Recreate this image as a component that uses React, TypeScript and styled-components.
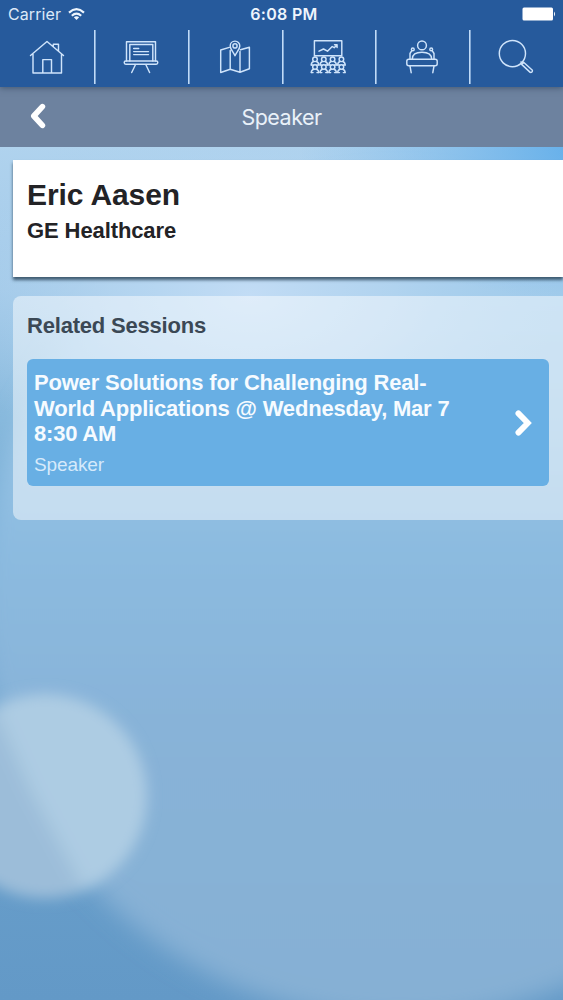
import React from "react";
import styled, { createGlobalStyle } from "styled-components";

const GlobalStyle = createGlobalStyle`
  *, *::before, *::after { box-sizing: border-box; }
  body { margin: 0; font-family: "Liberation Sans", Arial, sans-serif; }
`;

const Screen = styled.div`
  position: relative;
  isolation: isolate;
  width: 100%;
  height: 1000px;
  overflow: hidden;
  display: flex;
  flex-direction: column;
`;

const Wallpaper = styled.svg`
  position: absolute;
  inset: 0;
  z-index: -1;
  width: 100%;
  height: 100%;
`;

const TopBar = styled.header`
  position: relative;
  z-index: 1;
  height: 87px;
  flex: none;
  background: #265a9c;
  box-shadow: 0 1px 6px rgba(40, 60, 80, 0.6);
`;

const StatusBar = styled.div`
  display: grid;
  grid-template-columns: 1fr auto 1fr;
  align-items: center;
  height: 30px;
  padding: 0 7px 2px 12px;
  color: #fff;
  font-family: Inter, Roboto, sans-serif;
`;

const Carrier = styled.span`
  display: flex;
  align-items: center;
  gap: 7px;
  margin-left: -4px;
  font-size: 16px;
  letter-spacing: 0.1px;
  color: #dce9f8;
`;

const Clock = styled.span`
  font-size: 16px;
  font-weight: 600;
  letter-spacing: 0.3px;
  color: #eef5fd;
`;

const Battery = styled.svg`
  justify-self: end;
`;

const Tabs = styled.nav`
  display: grid;
  grid-template-columns: repeat(6, 1fr);
  height: 54px;
`;

const Tab = styled.a`
  display: flex;
  align-items: center;
  justify-content: center;
  & + & {
    box-shadow: inset 1.6px 0 0 #c0dbf8;
  }
`;

const TabIcon = styled.svg`
  width: 40px;
  height: 40px;
  fill: none;
  stroke: #cfe4fb;
  stroke-width: 1.45;
  stroke-linecap: round;
  stroke-linejoin: round;
`;

const TitleBar = styled.div`
  display: grid;
  grid-template-columns: 76px 1fr 76px;
  align-items: center;
  height: 60px;
  flex: none;
  background: #6d829f;
`;

const BackButton = styled.a`
  display: flex;
  justify-content: center;
  padding-bottom: 2px;
`;

const Title = styled.h1`
  margin: 0;
  text-align: center;
  font: 400 21.5px/26px Inter, Roboto, sans-serif;
  letter-spacing: -0.5px;
  color: #e9f1f9;
`;

const Content = styled.main`
  display: flex;
  flex-direction: column;
  gap: 19px;
  padding: 13px 0 0 13px;
`;

const ProfileCard = styled.section`
  height: 117px;
  padding: 17px 14px;
  background: #fff;
  box-shadow: 0 3px 3px rgba(45, 70, 90, 0.85);
`;

const Name = styled.h2`
  margin: 0;
  font-size: 30px;
  line-height: 36px;
  font-weight: 700;
  letter-spacing: -0.1px;
  color: #232326;
`;

const Company = styled.h3`
  margin: 5px 0 0;
  font-size: 22px;
  line-height: 26px;
  font-weight: 700;
  letter-spacing: -0.1px;
  color: #232326;
`;

const SessionsPanel = styled.section`
  height: 224px;
  padding: 16px 14px 0;
  border-radius: 8px 0 0 8px;
  background: rgba(255, 255, 255, 0.48);
`;

const PanelHeading = styled.h3`
  margin: 0 0 20px;
  font-size: 22px;
  line-height: 27px;
  font-weight: 700;
  letter-spacing: -0.2px;
  color: #3b4855;
`;

const SessionRow = styled.a`
  display: flex;
  align-items: center;
  justify-content: space-between;
  height: 127px;
  padding: 2px 16px 0 7px;
  border-radius: 6px;
  background: #68afe4;
`;

const SessionText = styled.div`
  width: 425px;
`;

const SessionTitle = styled.div`
  font-size: 22px;
  line-height: 25.7px;
  font-weight: 700;
  letter-spacing: -0.2px;
  color: #f6fbff;
`;

const SessionRole = styled.div`
  margin-top: 6px;
  font-size: 19px;
  line-height: 24px;
  letter-spacing: -0.1px;
  color: #d6eafb;
`;

const Backdrop = () => (
  <Wallpaper viewBox="0 0 563 1000" preserveAspectRatio="none" aria-hidden>
    <defs>
      <linearGradient id="base" x1="0" y1="0" x2="0" y2="1">
        <stop offset="0.14" stopColor="#b0d3ee" />
        <stop offset="0.29" stopColor="#a4cae9" />
        <stop offset="0.42" stopColor="#86b8dc" />
        <stop offset="0.52" stopColor="#70a8d1" />
        <stop offset="0.65" stopColor="#6ca3cd" />
        <stop offset="1" stopColor="#6399c7" />
      </linearGradient>
      <linearGradient id="disc" gradientUnits="userSpaceOnUse" x1="0" y1="220" x2="0" y2="1000">
        <stop offset="0" stopColor="#a6cfee" />
        <stop offset="0.25" stopColor="#99c5e6" />
        <stop offset="0.42" stopColor="#8cbbe0" />
        <stop offset="0.65" stopColor="#88b3d8" />
        <stop offset="1" stopColor="#86b0d4" />
      </linearGradient>
      <radialGradient id="glow">
        <stop offset="0" stopColor="#c2dcf5" />
        <stop offset="0.45" stopColor="#b8d7f1" stopOpacity="0.7" />
        <stop offset="1" stopColor="#a9d0ee" stopOpacity="0" />
      </radialGradient>
      <radialGradient id="corner">
        <stop offset="0" stopColor="#5fadea" />
        <stop offset="1" stopColor="#7ab9ea" stopOpacity="0" />
      </radialGradient>
      <filter id="soft" x="-20%" y="-20%" width="140%" height="140%">
        <feGaussianBlur stdDeviation="12" />
      </filter>
      <filter id="edge" x="-20%" y="-20%" width="140%" height="140%">
        <feGaussianBlur stdDeviation="7" />
      </filter>
      <filter id="fold" x="-20%" y="-20%" width="140%" height="140%">
        <feGaussianBlur stdDeviation="6" />
      </filter>
      <clipPath id="orb">
        <circle cx="45" cy="796" r="102" />
      </clipPath>
    </defs>
    <rect width="563" height="1000" fill="url(#base)" />
    <circle cx="400" cy="600" r="420" fill="url(#disc)" filter="url(#soft)" />
    <ellipse cx="250" cy="295" rx="310" ry="190" fill="url(#glow)" />
    <ellipse cx="590" cy="150" rx="290" ry="150" fill="url(#corner)" />
    <g filter="url(#edge)">
      <g clipPath="url(#orb)">
        <rect x="-70" y="680" width="230" height="230" fill="#adcce3" />
        <path d="M-80 700L-10 700L30 790L84 890L84 920H-80Z" fill="#9cbdd9" filter="url(#fold)" />
      </g>
    </g>
  </Wallpaper>
);

const Person = ({ x, y }: { x: number; y: number }) => (
  <g>
    <circle cx={x} cy={y} r="2.3" />
    <path d={`M${x - 3.7} ${y + 5.6}c0-2.2 1-3 2.4-3.4M${x + 3.7} ${y + 5.6}c0-2.2-1-3-2.4-3.4`} />
    <path d={`M${x - 3.7} ${y + 5.6}h1.8M${x + 3.7} ${y + 5.6}h-1.8`} />
  </g>
);

const seats = [7, 15.8, 24.6, 33.4];

const HomeIcon = () => (
  <TabIcon viewBox="0 0 40 40">
    <path d="M3.5 18.5L20 4.5L36.5 18.5M6 17V36h28.5V17M26.3 9.5V7.2h5.2v6.6M15.8 36V22.6h8.7V36" />
  </TabIcon>
);

const EaselIcon = () => (
  <TabIcon viewBox="0 0 40 40">
    <path d="M5.5 24V4.7H34.5V24M8.8 24V7.5H31.8V24" />
    <rect x="3.2" y="24" width="33.6" height="3.2" rx="1.6" />
    <path d="M14.3 28L10.7 35.5M25 28L28.6 35.5M12.7 11.5h5M12.7 14.6h14.8M12.7 17.6h14.8" />
  </TabIcon>
);

const MapIcon = () => (
  <TabIcon viewBox="0 0 40 40">
    <path d="M14.3 10.4L5.7 13V35.5L15.2 32.3L25 35.2L34.4 31.7V10.2L25.5 12.7M15.2 13.5V32.3M25 14.5V35.2" />
    <path d="M20 18.8C18.5 15 15.2 12.2 15.2 8.9A4.8 4.8 0 0 1 24.8 8.9C24.8 12.2 21.5 15 20 18.8Z" />
    <circle cx="20" cy="8.9" r="2.1" />
  </TabIcon>
);

const AudienceIcon = () => (
  <TabIcon viewBox="0 0 40 40">
    <rect x="6.4" y="3.8" width="27.4" height="15" />
    <path d="M11 14.2L15.5 12L19.5 14.2L24.2 9.5L26.2 10.7L29 8M26.5 7.8h2.6v2.6" />
    {seats.map((x) => <Person key={`a${x}`} x={x} y={22.3} />)}
    {seats.map((x) => <Person key={`b${x}`} x={x} y={30} />)}
  </TabIcon>
);

const PodiumIcon = () => (
  <TabIcon viewBox="0 0 40 40">
    <circle cx="20" cy="8.4" r="4.4" />
    <path d="M10.3 22.2C10.3 17.5 13.5 15.2 20 15.2S29.7 17.5 29.7 22.2" />
    <circle cx="10.8" cy="12.4" r="1.4" />
    <circle cx="29.2" cy="12.4" r="1.4" />
    <path d="M9.8 13.6L8 16.5V22M30.2 13.6L32 16.5V22" />
    <rect x="4.8" y="22.3" width="30.4" height="6.4" rx="2" />
    <path d="M8 29L9.2 35.7M32 29L30.8 35.7" />
  </TabIcon>
);

const SearchIcon = () => (
  <TabIcon viewBox="0 0 40 40">
    <circle cx="16.4" cy="16.6" r="13.1" />
    <path d="M25.6 27.4L34.2 35.4Q36.6 35.6 36.4 33.2L27.6 25.2ZM24.9 24.9L26.4 26.3" />
  </TabIcon>
);

const tabs = [HomeIcon, EaselIcon, MapIcon, AudienceIcon, PodiumIcon, SearchIcon];

export default function App() {
  return (
    <>
      <GlobalStyle />
      <Screen>
        <Backdrop />
        <TopBar>
          <StatusBar>
            <Carrier>
              Carrier
              <svg width="17" height="13" viewBox="0 0 17 13" fill="none" stroke="#eef5fd" strokeWidth="2.1">
                <path d="M1 4.6Q8.5-2.2 16 4.6M3.8 7.7Q8.5 3.4 13.2 7.7" />
                <path d="M8.5 12L5.8 9.3Q8.5 7.2 11.2 9.3Z" fill="#eef5fd" stroke="none" />
              </svg>
            </Carrier>
            <Clock>6:08 PM</Clock>
            <Battery width="34" height="14" viewBox="0 0 34 14" fill="#fff">
              <rect x="0.5" y="0.5" width="30.5" height="13" rx="1.5" />
              <path d="M32 4.5Q34 7 32 9.5Z" />
            </Battery>
          </StatusBar>
          <Tabs>
            {tabs.map((Icon, i) => (
              <Tab key={i}>
                <Icon />
              </Tab>
            ))}
          </Tabs>
        </TopBar>
        <TitleBar>
          <BackButton>
            <svg width="16" height="26" viewBox="0 0 16 26" fill="none" stroke="#fff" strokeWidth="5.6" strokeLinecap="round" strokeLinejoin="round">
              <path d="M12.4 3.6L3.8 13L12.4 22.4" />
            </svg>
          </BackButton>
          <Title>Speaker</Title>
        </TitleBar>
        <Content>
          <ProfileCard>
            <Name>Eric Aasen</Name>
            <Company>GE Healthcare</Company>
          </ProfileCard>
          <SessionsPanel>
            <PanelHeading>Related Sessions</PanelHeading>
            <SessionRow>
              <SessionText>
                <SessionTitle>
                  Power Solutions for Challenging Real-World Applications @ Wednesday, Mar 7 8:30 AM
                </SessionTitle>
                <SessionRole>Speaker</SessionRole>
              </SessionText>
              <svg width="18" height="28" viewBox="0 0 18 28" fill="none" stroke="#fff" strokeWidth="5.8" strokeLinecap="round" strokeLinejoin="miter">
                <path d="M3.4 3.4L12.8 13L3.4 22.6" />
              </svg>
            </SessionRow>
          </SessionsPanel>
        </Content>
      </Screen>
    </>
  );
}
